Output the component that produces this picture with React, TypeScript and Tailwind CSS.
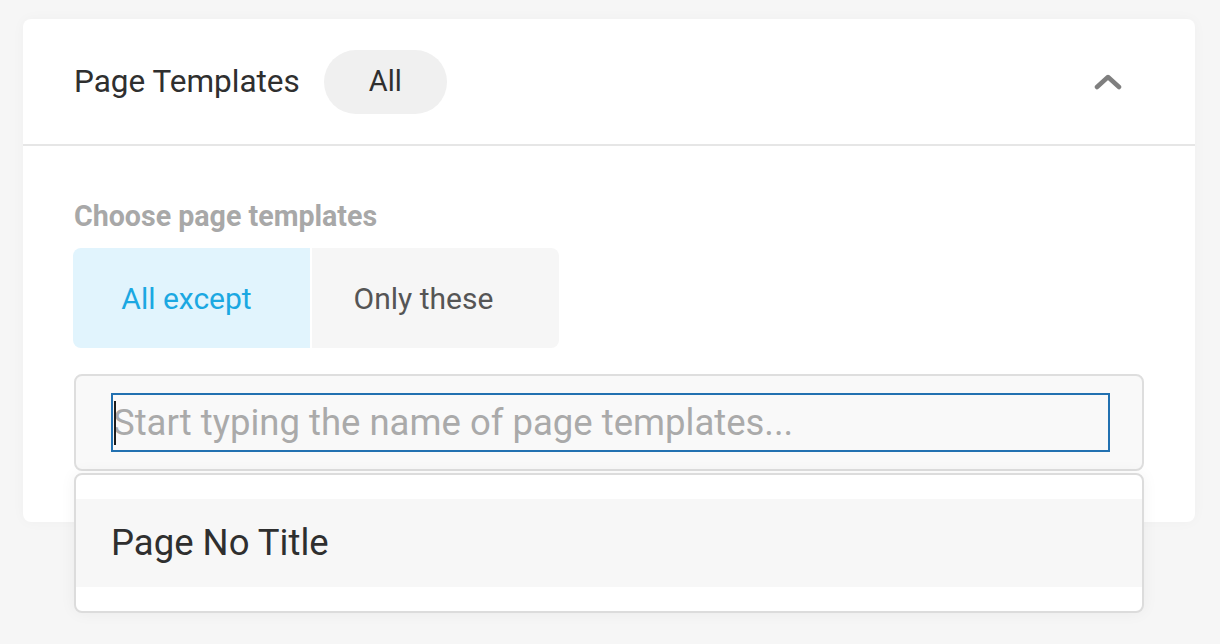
import React from "react";

export default function App() {
  return (
    <div className="min-h-[644px] bg-[#f6f6f6] pt-[19px] pl-[23px] pr-[25px] font-['Roboto',sans-serif]">
      <div className="rounded-[8px] bg-white shadow-[0_0_14px_rgba(0,0,0,0.03)]">
        {/* header */}
        <div className="flex h-[127px] items-center border-b-2 border-[#e6e6e6] pl-[51px] pr-[73px]">
          <span className="text-[31.5px] text-[#2f2f2f]">Page Templates</span>
          <span className="ml-[24px] flex h-[64px] w-[123px] items-center justify-center rounded-full bg-[#f0f0f0] text-[29px] text-[#2f2f2f]">
            All
          </span>
          <svg className="ml-auto" width="28" height="17" viewBox="0 0 28 17" fill="none">
            <polyline
              points="3,14 14,4 25,14"
              stroke="#7f7f7f"
              strokeWidth="4.5"
              strokeLinecap="round"
              strokeLinejoin="round"
            />
          </svg>
        </div>

        {/* body */}
        <div className="px-[51px] pt-[54px] pb-[51px]">
          <div className="text-[28.6px] leading-[32px] font-bold text-[#a8a8a8]">Choose page templates</div>

          <div className="mt-[16px] -ml-px flex h-[100px] w-[486px] gap-[2px] text-[30px]">
            <button className="flex w-[237px] items-center justify-center rounded-l-[8px] bg-[#e1f4fd] pr-[10px] text-[#1ba8e2]">
              All except
            </button>
            <button className="flex flex-1 items-center justify-center rounded-r-[8px] bg-[#f6f6f6] pr-[24px] text-[#555]">
              Only these
            </button>
          </div>

          <div className="relative mt-[26px]">
            <div className="h-[97px] rounded-[8px] border-2 border-[#dedede] bg-[#f9f9f9] pt-[17px] pl-[35px] pr-[32px]">
              <div className="relative h-[59px] border-2 border-[#2271b1]">
                <input
                  className="h-full w-full bg-transparent text-[36.5px] text-[#333] caret-transparent outline-none placeholder:text-[#aaa]"
                  placeholder="Start typing the name of page templates..."
                />
                <span className="absolute left-[1px] top-[6px] h-[44px] w-[2px] bg-[#1d1d1d]" />
              </div>
            </div>

            {/* dropdown */}
            <div className="absolute left-0 right-0 top-[99px] z-10 rounded-[8px] border-2 border-[#dcdcdc] bg-white py-[24px] shadow-[0_0_16px_rgba(0,0,0,0.05)]">
              <div className="flex h-[88px] items-center bg-[#f7f7f7] pl-[35px] text-[36.5px] text-[#2f2f2f]">
                Page No Title
              </div>
            </div>
          </div>
        </div>
      </div>
    </div>
  );
}
